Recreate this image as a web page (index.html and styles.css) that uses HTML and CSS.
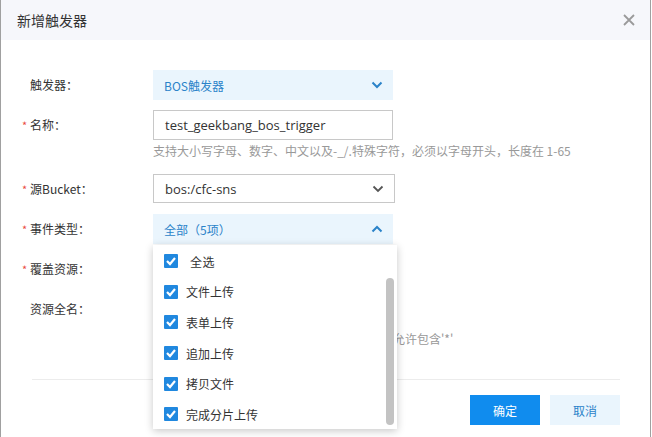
FILE: index.html
```html
<!DOCTYPE html>
<html lang="zh-CN">
<head>
    <meta charset="UTF-8">
    <title>新增触发器</title>
    <link rel="stylesheet" href="styles.css">
</head>
<body>

<div class="dialog">
    <div class="dialog-head">
        <span class="dialog-title">新增触发器</span>
        <svg class="close" width="12" height="12" viewBox="0 0 12 12">
            <path d="M1 1 L11 11 M11 1 L1 11" stroke="#9a9a9a" stroke-width="1.8" fill="none"/>
        </svg>
    </div>

    <div class="dialog-body">
        <div class="row">
            <div class="label">触发器：</div>
            <div class="control">
                <div class="select active">
                    <span>BOS触发器</span>
                    <svg class="arrow" width="12" height="8" viewBox="0 0 12 8">
                        <path d="M1.5 1.5 L6 6 L10.5 1.5" stroke="#2b83c9" stroke-width="2" fill="none"/>
                    </svg>
                </div>
            </div>
        </div>

        <div class="row">
            <div class="label"><i class="req">*</i>名称：</div>
            <div class="control">
                <div class="input">test_geekbang_bos_trigger</div>
                <div class="help">支持大小写字母、数字、中文以及-_/.特殊字符，必须以字母开头，长度在 1-65</div>
            </div>
        </div>

        <div class="row bucket">
            <div class="label"><i class="req">*</i>源Bucket：</div>
            <div class="control">
                <div class="select plain">
                    <span>bos:/cfc-sns</span>
                    <svg class="arrow" width="12" height="8" viewBox="0 0 12 8">
                        <path d="M1.5 1.5 L6 6 L10.5 1.5" stroke="#555" stroke-width="1.8" fill="none"/>
                    </svg>
                </div>
            </div>
        </div>

        <div class="row">
            <div class="label"><i class="req">*</i>事件类型：</div>
            <div class="control">
                <div class="select active open">
                    <span>全部（5项）</span>
                    <svg class="arrow" width="12" height="8" viewBox="0 0 12 8">
                        <path d="M1.5 6.5 L6 2 L10.5 6.5" stroke="#2b83c9" stroke-width="2" fill="none"/>
                    </svg>
                    <div class="dropdown">
                        <div class="option all"><span class="check"></span>全选</div>
                        <div class="option"><span class="check"></span>文件上传</div>
                        <div class="option"><span class="check"></span>表单上传</div>
                        <div class="option"><span class="check"></span>追加上传</div>
                        <div class="option"><span class="check"></span>拷贝文件</div>
                        <div class="option"><span class="check"></span>完成分片上传</div>
                        <div class="scroll-thumb"></div>
                    </div>
                </div>
            </div>
        </div>

        <div class="row">
            <div class="label"><i class="req">*</i>覆盖资源：</div>
            <div class="control"></div>
        </div>

        <div class="row">
            <div class="label">资源全名：</div>
            <div class="control">
                <div class="input empty"></div>
                <div class="help low">前缀与后缀用于过滤资源，前缀和后缀中均不允许包含'*'</div>
            </div>
        </div>
    </div>

    <div class="dialog-foot">
        <button class="btn primary">确定</button>
        <button class="btn">取消</button>
    </div>
</div>

</body>
</html>
```

FILE: styles.css
```css
body {
    margin: 0;
    font-family: "Noto Sans CJK SC", "Open Sans", sans-serif;
    font-size: 12px;
    color: #333;
    background-color: #fff;
}

.dialog {
    width: 651px;
    height: 437px;
    border-left: 1px solid #a0a0a0;
    border-right: 1px solid #a0a0a0;
    box-sizing: border-box;
    background-color: #fff;
    overflow: hidden;
}

.dialog-head {
    height: 40px;
    background-color: #f6f7fb;
    display: flex;
    align-items: center;
    justify-content: space-between;
    padding: 0 15px 0 16px;
}

.dialog-title {
    font-size: 14px;
    color: #333;
}

.dialog-body {
    padding-top: 30px;
}

.row {
    display: flex;
    margin-bottom: 10px;
}

.row.bucket {
    margin-top: -1px;
}

.label {
    width: 152px;
    box-sizing: border-box;
    padding-left: 29px;
    height: 30px;
    line-height: 30px;
    color: #333;
}

.req {
    font-style: normal;
    color: #ea4b3f;
    margin-left: -8px;
    display: inline-block;
    width: 8px;
    font-size: 11px;
}

.control {
    width: 240px;
    position: relative;
    min-height: 30px;
}

.select {
    height: 30px;
    box-sizing: border-box;
    display: flex;
    align-items: center;
    justify-content: space-between;
    padding: 0 10px 0 11px;
    position: relative;
    font-size: 12px;
}

.select.active {
    background-color: #eaf5fd;
    color: #2b83c9;
}

.select.plain {
    border: 1px solid #c8c8c8;
    width: 242px;
    height: 29px;
    font-family: "Open Sans", "Noto Sans CJK SC", sans-serif;
    font-size: 13px;
    color: #333;
}

.input {
    height: 30px;
    border: 1px solid #c8c8c8;
    box-sizing: border-box;
    padding: 0 11px;
    line-height: 28px;
    font-family: "Open Sans", "Noto Sans CJK SC", sans-serif;
    font-size: 13px;
    color: #333;
}

.help {
    color: #999;
    white-space: nowrap;
    line-height: 22px;
    margin-bottom: 3px;
}

.help.low {
    margin-top: 4px;
}

.dropdown {
    position: absolute;
    top: 31px;
    left: 0;
    width: 244px;
    height: 184px;
    box-sizing: border-box;
    padding-top: 1px;
    background-color: #fff;
    box-shadow: 0 2px 8px rgba(0, 0, 0, 0.22);
    z-index: 10;
    color: #333;
}

.option {
    height: 30.6px;
    display: flex;
    align-items: center;
    padding-left: 11px;
}

.option.all {
    letter-spacing: 0.5px;
}

.option.all .check {
    margin-right: 12px;
}

.check {
    width: 14px;
    height: 14px;
    margin-right: 8px;
    background-color: #2088df;
    border-radius: 1px;
    background-image: url("data:image/svg+xml;utf8,<svg xmlns='http://www.w3.org/2000/svg' width='14' height='14' viewBox='0 0 14 14'><path d='M3 7 L6 10 L11 4' stroke='white' stroke-width='2.2' fill='none'/></svg>");
}

.scroll-thumb {
    position: absolute;
    top: 33px;
    right: 3px;
    width: 8px;
    height: 147px;
    border-radius: 4px;
    background-color: #c3c3c3;
}

.dialog-foot {
    margin: 26px 30px 0 31px;
    border-top: 1px solid #ececec;
    padding-top: 15px;
    display: flex;
    justify-content: flex-end;
    gap: 10px;
}

.btn {
    width: 70px;
    height: 30px;
    border: none;
    font-family: "Noto Sans CJK SC", sans-serif;
    font-size: 12px;
    background-color: #eaf5fd;
    color: #2b83c9;
    padding: 0;
}

.btn.primary {
    background-color: #108cee;
    color: #fff;
}
```
